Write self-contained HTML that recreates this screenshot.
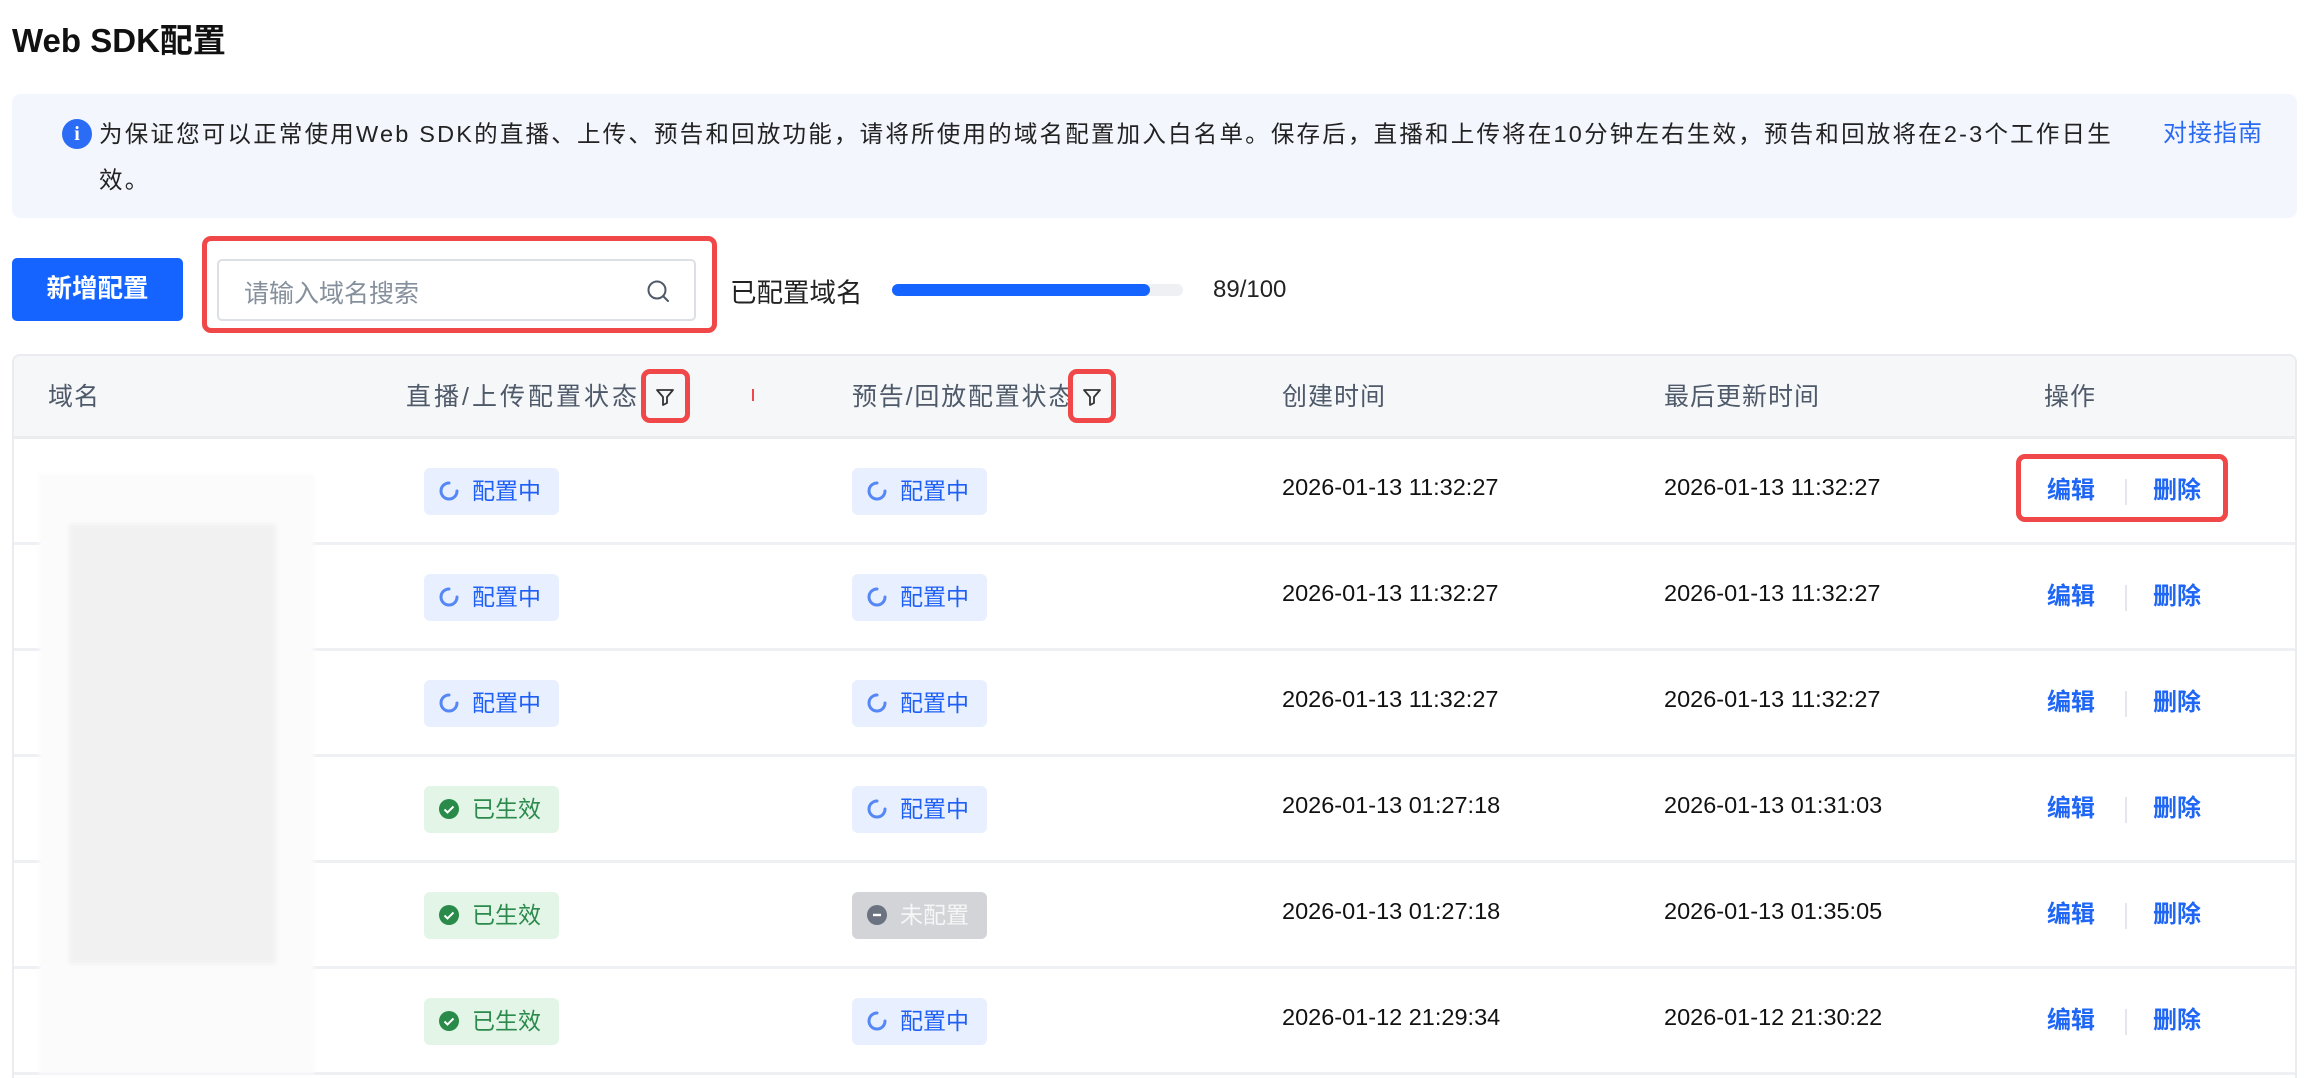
<!DOCTYPE html>
<html><head><meta charset="utf-8"><style>
*{margin:0;padding:0;box-sizing:border-box}
html,body{width:2312px;height:1078px;overflow:hidden}
body{background:#fff;font-family:"Liberation Sans","Noto Sans CJK SC",sans-serif;color:#1d2129;position:relative}
.abs{position:absolute}
.title{left:12px;top:14px;font-size:33px;font-weight:bold;color:#111}
.info{left:12px;top:94px;width:2285px;height:124px;background:#f3f6fd;border-radius:8px}
.info .ic{left:50px;top:25px;width:30px;height:30px;border-radius:50%;background:#2b6cf6;color:#fff;font-size:20px;font-weight:bold;text-align:center;line-height:30px;font-family:"Liberation Serif",serif}
.info .t{left:87px;top:17px;font-size:23.5px;line-height:46px;color:#222;white-space:nowrap;letter-spacing:2.2px}
.info .lk{left:2151px;top:20px;font-size:24px;line-height:40px;color:#2a6af2;letter-spacing:1px}
.btn{left:12px;top:258px;width:171px;height:63px;background:#1664ff;border-radius:5px;color:#fff;font-size:25.5px;font-weight:bold;text-align:center;line-height:63px}
.redbox{border:5px solid #f04848;border-radius:9px}
.search{left:217px;top:259px;width:479px;height:62px;border:2px solid #dcdfe4;border-radius:5px}
.search span{position:absolute;left:25px;top:13px;font-size:25px;color:#86909c}
.lbl{left:730px;top:271px;font-size:26.5px;color:#222}
.bar{left:892px;top:284px;width:291px;height:12px;border-radius:6px;background:#eef0f3}
.bar i{position:absolute;left:0;top:0;height:12px;width:258px;border-radius:6px;background:#1664ff}
.cnt{left:1213px;top:276px;font-size:24px;color:#222}
.table{left:12px;top:354px;width:2285px;height:740px;border:2px solid #eaecf0;border-radius:8px;overflow:hidden}
.thead{position:absolute;left:0;top:0;width:100%;height:83px;background:#f6f7f9;border-bottom:3px solid #eaecf0}
.th{position:absolute;top:21px;font-size:25px;color:#4e5969;letter-spacing:1px}
.row{position:absolute;left:0;width:100%;height:106px;border-bottom:3px solid #eef0f3}
.cell{position:absolute;top:35px;font-size:23.5px;color:#111}
.tag{position:absolute;top:29px;width:135px;height:47px;border-radius:6px;font-size:23px;line-height:47px;padding-left:48px}
.tag svg{position:absolute;left:14px;top:12px}
.tb{background:#e8effe;color:#1e5ff5}
.tg{background:#e2f5e7;color:#2c8a4c}
.tx{background:#d2d4d8;color:#f6f6f6}
.act{position:absolute;top:31px;font-size:24px;color:#1f66f5;font-weight:bold}
.div{position:absolute;left:2111px;top:40px;width:2px;height:26px;background:#e5e6eb}
.blur{left:39px;top:474px;width:275px;height:600px;background:#fbfbfb;filter:blur(2px)}
.bk{position:absolute;background:#f1f1f1}
</style></head><body>
<div class="abs title">Web SDK配置</div>
<div class="abs info">
 <div class="abs ic">i</div>
 <div class="abs t">为保证您可以正常使用Web SDK的直播、上传、预告和回放功能，请将所使用的域名配置加入白名单。保存后，直播和上传将在10分钟左右生效，预告和回放将在2-3个工作日生<br>效。</div>
 <div class="abs lk">对接指南</div>
</div>
<div class="abs btn">新增配置</div>
<div class="abs redbox" style="left:202px;top:236px;width:515px;height:97px"></div>
<div class="abs search"><span>请输入域名搜索</span>
<svg class="abs" style="left:427px;top:18px" width="26" height="26" viewBox="0 0 26 26"><circle cx="11" cy="11" r="8.5" fill="none" stroke="#4e5969" stroke-width="2"/><path d="M17.5 17.5L22 22" stroke="#4e5969" stroke-width="2" stroke-linecap="round"/></svg></div>
<div class="abs lbl">已配置域名</div>
<div class="abs bar"><i></i></div>
<div class="abs cnt">89/100</div>

<div class="abs table">
 <div class="thead">
  <div class="th" style="left:34px">域名</div>
  <div class="th" style="left:392px;letter-spacing:3px">直播/上传配置状态</div>
  <div class="th" style="left:838px;letter-spacing:1.8px">预告/回放配置状态</div>
  <div class="th" style="left:1268px">创建时间</div>
  <div class="th" style="left:1650px">最后更新时间</div>
  <div class="th" style="left:2030px">操作</div>
 </div>
 <div id="rows"></div>
</div>

<div class="abs redbox" style="left:641px;top:369px;width:49px;height:54px"></div>
<svg class="abs" style="left:654px;top:386px" width="22" height="22" viewBox="0 0 22 22"><path d="M3 4h16l-6 7v6l-4 2v-8z" fill="none" stroke="#333" stroke-width="1.8" stroke-linejoin="round"/></svg>
<div class="abs redbox" style="left:1068px;top:369px;width:48px;height:54px"></div>
<svg class="abs" style="left:1081px;top:386px" width="22" height="22" viewBox="0 0 22 22"><path d="M3 4h16l-6 7v6l-4 2v-8z" fill="none" stroke="#333" stroke-width="1.8" stroke-linejoin="round"/></svg>
<div class="abs" style="left:752px;top:389px;width:2px;height:12px;background:#f04848"></div>
<div class="abs redbox" style="left:2016px;top:454px;width:212px;height:68px"></div>

<div class="abs blur">
 <div class="bk" style="left:30px;top:50px;width:207px;height:240px"></div>
 <div class="bk" style="left:30px;top:260px;width:207px;height:230px"></div>
</div>

<script>
var data=[
["b","b","2026-01-13 11:32:27","2026-01-13 11:32:27"],
["b","b","2026-01-13 11:32:27","2026-01-13 11:32:27"],
["b","b","2026-01-13 11:32:27","2026-01-13 11:32:27"],
["g","b","2026-01-13 01:27:18","2026-01-13 01:31:03"],
["g","x","2026-01-13 01:27:18","2026-01-13 01:35:05"],
["g","b","2026-01-12 21:29:34","2026-01-12 21:30:22"]];
function tag(t,l){
 if(t=="b")return '<div class="tag tb" style="left:'+l+'px"><svg width="22" height="22" viewBox="0 0 22 22"><path d="M11 3a8 8 0 1 0 8 8" fill="none" stroke="#3b74f5" stroke-width="3" stroke-linecap="round" opacity=".85"/></svg>配置中</div>';
 if(t=="g")return '<div class="tag tg" style="left:'+l+'px"><svg width="22" height="22" viewBox="0 0 22 22"><circle cx="11" cy="11" r="10" fill="#2a8a4a"/><path d="M6.5 11.5l3 3 6-6" fill="none" stroke="#fff" stroke-width="2"/></svg>已生效</div>';
 return '<div class="tag tx" style="left:'+l+'px"><svg width="22" height="22" viewBox="0 0 22 22"><circle cx="11" cy="11" r="10" fill="#6b7280"/><path d="M7 11h8" stroke="#fff" stroke-width="2.4"/></svg>未配置</div>';
}
var h='';
data.forEach(function(d,i){
 h+='<div class="row" style="top:'+(83+i*106)+'px">'+tag(d[0],410)+tag(d[1],838)+
 '<div class="cell" style="left:1268px">'+d[2]+'</div><div class="cell" style="left:1650px">'+d[3]+'</div>'+
 '<div class="act" style="left:2033px">编辑</div><div class="div"></div><div class="act" style="left:2139px">删除</div></div>';
});
document.getElementById('rows').innerHTML=h;
</script>
</body></html>
